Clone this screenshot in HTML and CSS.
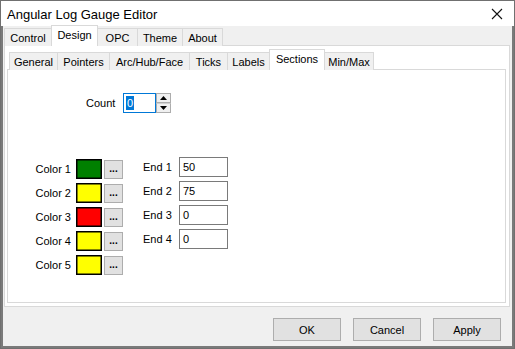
FILE: index.html
```html
<!DOCTYPE html>
<html lang="en">
<head>
    <meta charset="UTF-8">
    <title>Angular Log Gauge Editor</title>
    <link rel="stylesheet" href="styles.css">
</head>
<body>
    <div class="window">
        <div class="titlebar">
            <span class="title">Angular Log Gauge Editor</span>
            <svg class="close" width="12" height="12" viewBox="0 0 12 12">
                <path d="M1 1 L11 11 M11 1 L1 11" stroke="#111" stroke-width="1.1" fill="none"/>
            </svg>
        </div>

        <div class="client">
            <!-- top level tabs -->
            <div class="tabs outer-tabs">
                <div class="tab">Control</div>
                <div class="tab active">Design</div>
                <div class="tab">OPC</div>
                <div class="tab">Theme</div>
                <div class="tab">About</div>
            </div>

            <div class="panel outer-panel">
                <div class="tabs inner-tabs">
                    <div class="tab">General</div>
                    <div class="tab">Pointers</div>
                    <div class="tab">Arc/Hub/Face</div>
                    <div class="tab">Ticks</div>
                    <div class="tab">Labels</div>
                    <div class="tab active">Sections</div>
                    <div class="tab">Min/Max</div>
                </div>

                <div class="panel inner-panel">
                    <div class="count-row">
                        <span class="count-label">Count</span>
                        <div class="spin">
                            <div class="spin-input"><span class="sel">0</span></div>
                            <div class="spin-buttons">
                                <div class="spin-btn">
                                    <svg width="7" height="4" viewBox="0 0 7 4"><path d="M0 4 L3.5 0 L7 4 Z" fill="#000"/></svg>
                                </div>
                                <div class="spin-btn">
                                    <svg width="7" height="4" viewBox="0 0 7 4"><path d="M0 0 L7 0 L3.5 4 Z" fill="#000"/></svg>
                                </div>
                            </div>
                        </div>
                    </div>

                    <div class="sections">
                        <div class="colors">
                            <div class="color-row">
                                <span class="row-label">Color 1</span>
                                <div class="swatch green"></div>
                                <div class="dots">...</div>
                            </div>
                            <div class="color-row">
                                <span class="row-label">Color 2</span>
                                <div class="swatch yellow"></div>
                                <div class="dots">...</div>
                            </div>
                            <div class="color-row">
                                <span class="row-label">Color 3</span>
                                <div class="swatch red"></div>
                                <div class="dots">...</div>
                            </div>
                            <div class="color-row">
                                <span class="row-label">Color 4</span>
                                <div class="swatch yellow"></div>
                                <div class="dots">...</div>
                            </div>
                            <div class="color-row">
                                <span class="row-label">Color 5</span>
                                <div class="swatch yellow"></div>
                                <div class="dots">...</div>
                            </div>
                        </div>

                        <div class="ends">
                            <div class="end-row">
                                <span class="end-label">End 1</span>
                                <div class="text-input">50</div>
                            </div>
                            <div class="end-row">
                                <span class="end-label">End 2</span>
                                <div class="text-input">75</div>
                            </div>
                            <div class="end-row">
                                <span class="end-label">End 3</span>
                                <div class="text-input">0</div>
                            </div>
                            <div class="end-row">
                                <span class="end-label">End 4</span>
                                <div class="text-input">0</div>
                            </div>
                        </div>
                    </div>
                </div>
            </div>

            <div class="footer">
                <div class="button">OK</div>
                <div class="button">Cancel</div>
                <div class="button">Apply</div>
            </div>
        </div>
    </div>
</body>
</html>
```

FILE: styles.css
```css
* {
    box-sizing: border-box;
}

body {
    margin: 0;
    background: #fff;
    font-family: "Liberation Sans", Arial, sans-serif;
    font-size: 11px;
    color: #000;
}

.window {
    width: 515px;
    height: 349px;
    border: 1px solid #707070;
    display: flex;
    flex-direction: column;
}

.titlebar {
    height: 25px;
    background: #fff;
    display: flex;
    align-items: center;
    justify-content: space-between;
    padding: 0 11px 0 6px;
}

.title {
    font-size: 13px;
    padding-top: 1px;
}

.close {
    margin-top: 1px;
}

.client {
    flex: 1;
    background: #f0f0f0;
    border: 2px solid #7a7a7a;
    border-top: none;
    display: flex;
    flex-direction: column;
}

/* tab strips */
.tabs {
    display: flex;
    align-items: flex-end;
    position: relative;
    z-index: 1;
}

.tab {
    flex-shrink: 0;
    height: 18px;
    border: 1px solid #d9d9d9;
    border-bottom: none;
    margin-right: -1px;
    background: #f0f0f0;
    display: flex;
    align-items: center;
    justify-content: center;
    white-space: nowrap;
}

.tab.active {
    height: 21px;
    background: #fff;
    position: relative;
    z-index: 2;
    padding-bottom: 3px;
}

.outer-tabs {
    height: 20px;
    padding-left: 1px;
}

.outer-tabs .tab:nth-child(1) { width: 48px; }
.outer-tabs .tab:nth-child(2) { width: 47px; }
.outer-tabs .tab:nth-child(3) { width: 41px; }
.outer-tabs .tab:nth-child(4) { width: 46px; }
.outer-tabs .tab:nth-child(5) { width: 41px; }

.inner-tabs {
    height: 24px;
    padding-left: 2px;
}

.inner-tabs .tab:nth-child(1) { width: 49px; }
.inner-tabs .tab:nth-child(2) { width: 53px; }
.inner-tabs .tab:nth-child(3) { width: 81px; }
.inner-tabs .tab:nth-child(4) { width: 39px; }
.inner-tabs .tab:nth-child(5) { width: 43px; }
.inner-tabs .tab:nth-child(6) { width: 56px; }
.inner-tabs .tab:nth-child(7) { width: 50px; }

.panel {
    background: #fff;
    border: 1px solid #d9d9d9;
}

.outer-panel {
    height: 262px;
    margin: -1px 2px 0 1px;
    padding: 0 3px 3px 2px;
    display: flex;
    flex-direction: column;
}

.inner-panel {
    flex: 1;
    margin-top: -1px;
    padding-top: 23px;
}

/* count */
.count-row {
    display: flex;
    align-items: center;
    height: 20px;
    padding-left: 78px;
}

.count-label {
    width: 37px;
}

.spin {
    display: flex;
    height: 20px;
}

.spin-input {
    width: 33px;
    height: 20px;
    border: 1px solid #0078d7;
    background: #fff;
    padding: 2px 0 0 2px;
}

.sel {
    display: inline-block;
    background: #0078d7;
    color: #fff;
    line-height: 14px;
    padding: 0 1px;
}

.spin-buttons {
    display: flex;
    flex-direction: column;
    width: 15px;
}

.spin-btn {
    height: 10px;
    background: #f0f0f0;
    border: 1px solid #adadad;
    display: flex;
    align-items: center;
    justify-content: center;
}

.spin-btn + .spin-btn {
    border-top-color: #d0d0d0;
}

/* sections */
.sections {
    display: flex;
    margin-top: 44px;
}

.colors {
    padding-top: 2px;
}

.color-row,
.end-row {
    display: flex;
    align-items: center;
    height: 20px;
    margin-bottom: 4px;
}

.row-label {
    flex-shrink: 0;
    width: 63px;
    text-align: right;
    margin-right: 5px;
}

.swatch {
    width: 26px;
    height: 20px;
    border: 1px solid #000;
    box-shadow: inset 0 0 0 0.5px #000;
}

.green { background: #008000; }
.yellow { background: #ffff00; }
.red { background: #ff0000; }

.dots {
    width: 19px;
    height: 19px;
    margin-left: 2px;
    background: #e1e1e1;
    border: 1px solid #adadad;
    font-weight: bold;
    font-size: 10px;
    line-height: 15px;
    text-align: center;
}

.ends {
    margin-left: 20px;
}

.end-label {
    flex-shrink: 0;
    width: 29px;
    margin-right: 7px;
    white-space: nowrap;
}

.text-input {
    flex-shrink: 0;
    width: 49px;
    height: 20px;
    border: 1px solid #7a7a7a;
    background: #fff;
    padding: 3px 0 0 3px;
}

/* footer */
.footer {
    flex: 1;
    display: flex;
    justify-content: flex-end;
    gap: 12px;
    padding: 11px 11px 0 0;
}

.button {
    width: 68px;
    height: 23px;
    background: #e1e1e1;
    border: 1px solid #adadad;
    display: flex;
    align-items: center;
    justify-content: center;
}
```
